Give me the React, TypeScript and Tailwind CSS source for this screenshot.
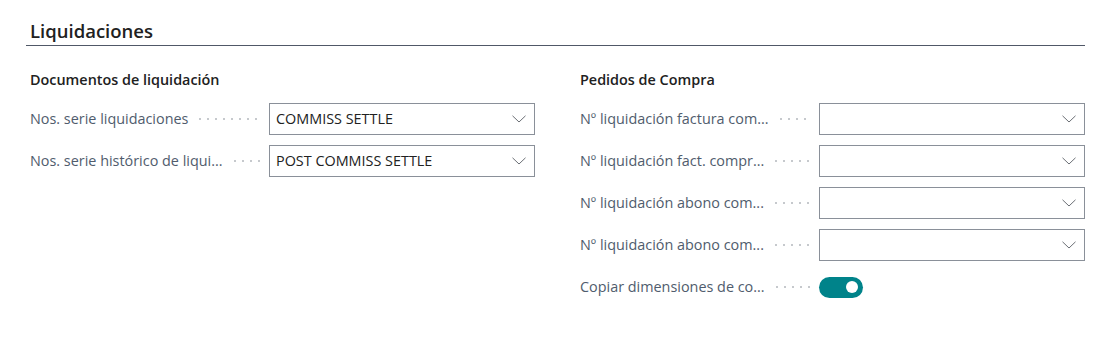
type Field =
  | { label: string; kind: "select"; value: string }
  | { label: string; kind: "toggle"; on: boolean };

const left: Field[] = [
  { label: "Nos. serie liquidaciones", kind: "select", value: "COMMISS SETTLE" },
  { label: "Nos. serie histórico de liqui...", kind: "select", value: "POST COMMISS SETTLE" },
];

const right: Field[] = [
  { label: "Nº liquidación factura com...", kind: "select", value: "" },
  { label: "Nº liquidación fact. compr...", kind: "select", value: "" },
  { label: "Nº liquidación abono com...", kind: "select", value: "" },
  { label: "Nº liquidación abono com...", kind: "select", value: "" },
  { label: "Copiar dimensiones de co...", kind: "toggle", on: true },
];

const Chevron = () => (
  <svg width="14" height="8" viewBox="0 0 14 8" fill="none" className="shrink-0">
    <path d="M0.5 0.8 L7 7 L13.5 0.8" stroke="#6b6f75" strokeWidth="1" />
  </svg>
);

const Row = ({ field }: { field: Field }) => (
  <div className="flex items-center h-8">
    <div className="w-[239px] shrink-0 flex items-center pr-2">
      <span className="whitespace-nowrap text-[14.4px] text-[#505c6d]">{field.label}</span>
      <span className="flex-1 h-[4px] ml-2 bg-[radial-gradient(circle,#c6c9cd_0.9px,transparent_1.2px)] bg-[length:8px_4px] bg-repeat-x" />
    </div>
    {field.kind === "select" ? (
      <div className="flex-1 h-8 border border-[#8a9099] flex items-center justify-between pl-[6px] pr-[8px]">
        <span className="text-[14.4px] text-[#212121]">{field.value}</span>
        <Chevron />
      </div>
    ) : (
      <div className="w-[44px] h-[21px] rounded-full bg-[#00838a] flex items-center justify-end pr-[5px]">
        <span className="w-[12px] h-[12px] rounded-full bg-white" />
      </div>
    )}
  </div>
);

const Column = ({ title, fields }: { title: string; fields: Field[] }) => (
  <div className="flex flex-col">
    <h3 className="text-[14.4px] font-semibold text-[#212121] h-5 leading-5 mb-[13px]">{title}</h3>
    <div className="flex flex-col gap-[10px]">
      {fields.map((f, i) => (
        <Row key={i} field={f} />
      ))}
    </div>
  </div>
);

export default function App() {
  return (
    <div className="w-[1100px] h-[347px] bg-white pl-[15px] pr-[15px] pt-[18px] font-['Open_Sans','Noto_Sans',sans-serif]">
      <div className="ml-[11px] border-b border-[#505867] pb-[1px]">
        <h2 className="pl-1 text-[18.5px] font-semibold text-[#212121] leading-[26px]">Liquidaciones</h2>
      </div>
      <div className="ml-[15px] mt-[24px] grid grid-cols-2 gap-x-[45px]">
        <Column title="Documentos de liquidación" fields={left} />
        <Column title="Pedidos de Compra" fields={right} />
      </div>
    </div>
  );
}
